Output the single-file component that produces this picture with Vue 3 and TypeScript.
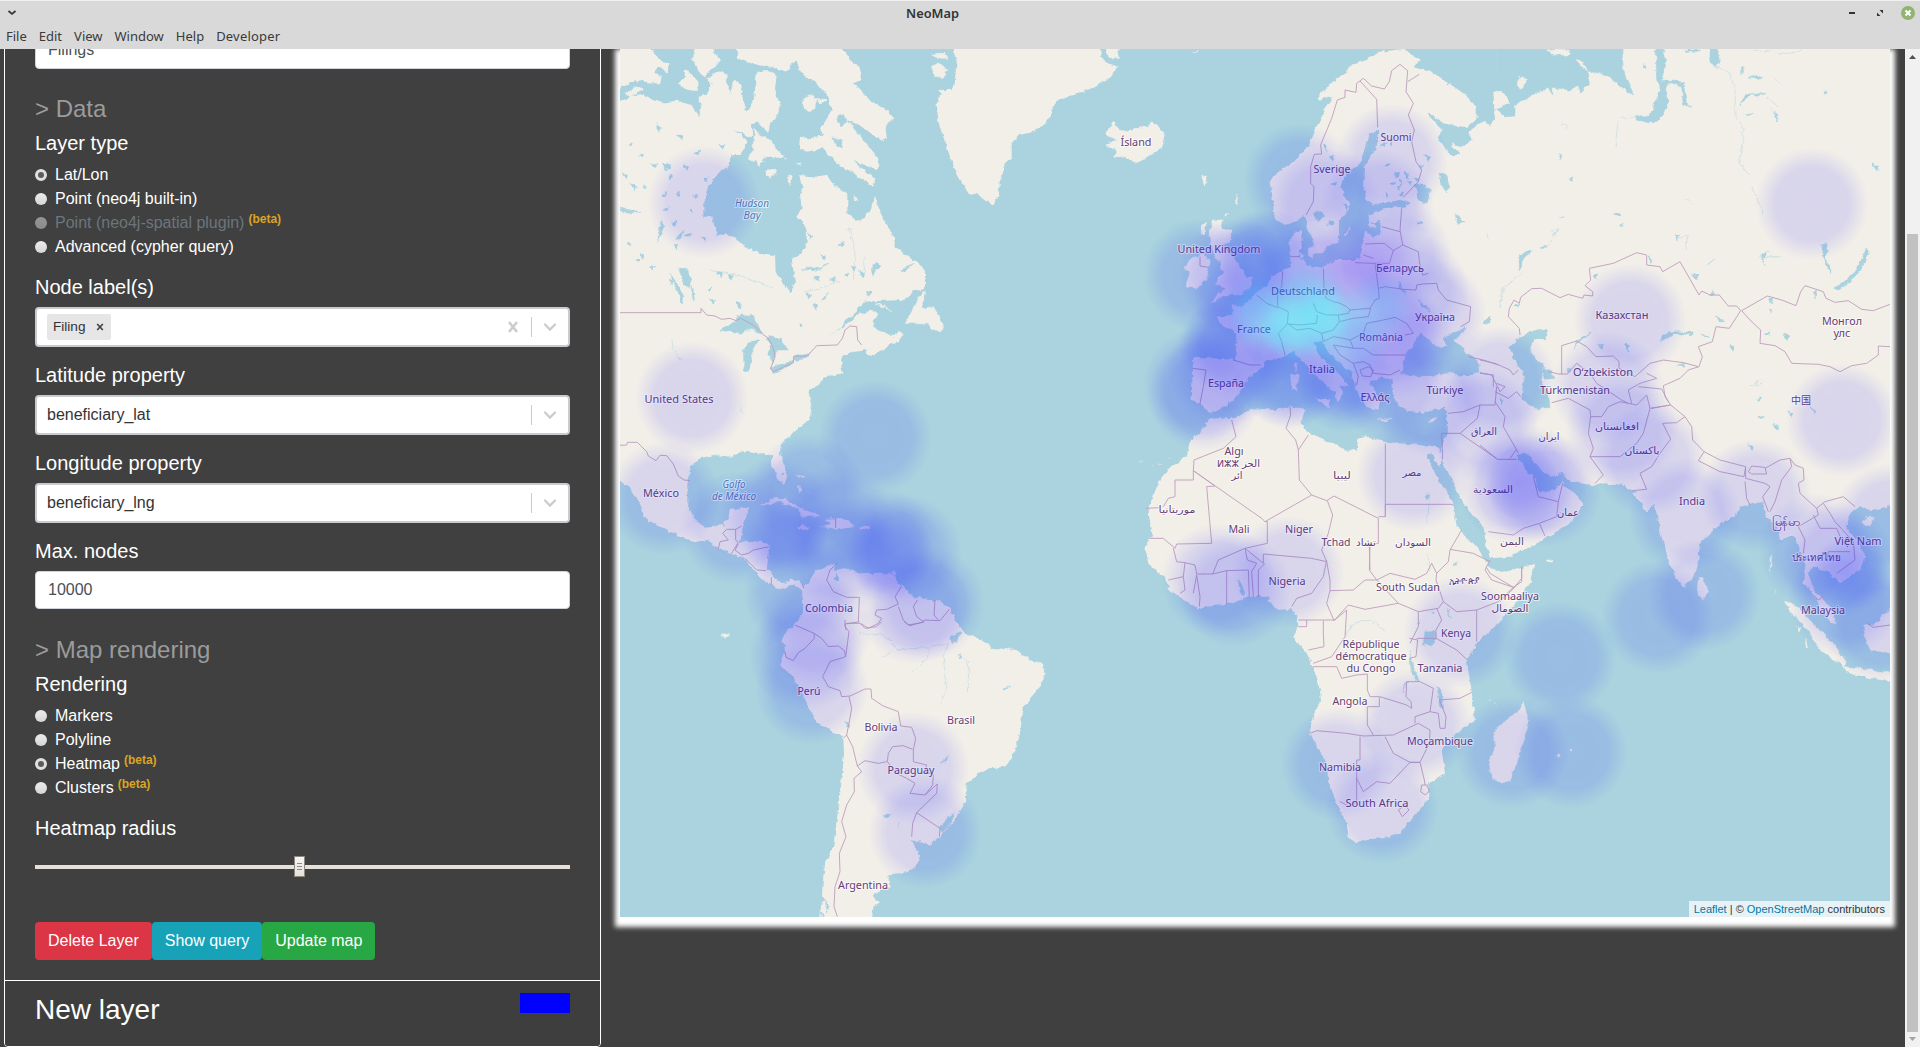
<script setup lang="ts">
import { ref } from 'vue'

type Pt = [number, number]
interface Sheet { at: Pt; land?: string[]; water?: string[]; isles?: string[]; borders?: string[]; rivers?: string[] }
interface Label { x: number; y: number; w: number; t: string; sea?: boolean }

const menus = ['File', 'Edit', 'View', 'Window', 'Help', 'Developer']
const layerType = ref('latlon')
const rendering = ref('heatmap')
const layerTypes = [
  { id: 'latlon', name: 'Lat/Lon' },
  { id: 'point', name: 'Point (neo4j built-in)' },
  { id: 'spatial', name: 'Point (neo4j-spatial plugin)', beta: true, disabled: true },
  { id: 'advanced', name: 'Advanced (cypher query)' },
]
const renderings = [
  { id: 'markers', name: 'Markers' },
  { id: 'polyline', name: 'Polyline' },
  { id: 'heatmap', name: 'Heatmap', beta: true },
  { id: 'clusters', name: 'Clusters', beta: true },
]
const properties = [
  { title: 'Latitude property', value: 'beneficiary_lat' },
  { title: 'Longitude property', value: 'beneficiary_lng' },
]

// Map sheets: path units are thirds of a pixel, measured from the sheet's origin.
const sheets: Sheet[] = [
  {
    at: [610, 40],
    land: [
      // North and Central America
      'M20 190L60 170 100 165 120 175 150 188 200 182 225 190 245 195 268 228 275 190 262 170 290 165 305 130 330 110 345 110 360 160 370 122 385 125 395 150 400 185 412 215 430 190 435 150 440 95 475 90 500 105 495 150 512 200 500 230 480 250 475 280 440 245 425 250 430 285 415 292 370 270 410 300 395 345 365 345 350 382 325 400 300 435 283 480 283 530 308 533 320 587 345 580 375 592 405 620 450 640 495 645 497 700 520 725 540 755 555 730 545 655 575 640 590 610 590 570 575 545 560 533 575 500 570 465 578 450 567 405 620 410 645 405 680 440 712 460 712 520 745 547 775 520 785 490 795 472 820 540 850 580 855 615 880 640 920 665 945 690 945 740 910 755 880 780 760 785 740 815 720 830 690 865 650 890 700 860 740 825 780 812 800 815 800 828 790 850 800 870 830 880 850 895 865 870 878 885 865 905 840 915 815 930 790 948 772 945 770 930 735 935 700 945 693 975 700 1000 640 1010 635 1025 600 1050 598 1070 605 1100 600 1135 560 1170 530 1195 512 1215 510 1240 520 1270 530 1305 520 1335 500 1310 487 1275 485 1250 465 1240 440 1240 420 1232 395 1235 365 1250 310 1245 270 1255 240 1280 238 1310 232 1330 232 1390 255 1440 285 1460 340 1455 358 1430 358 1410 415 1402 412 1430 400 1455 390 1505 425 1503 470 1507 478 1525 470 1590 500 1620 520 1630 545 1618 570 1622 582 1645 580 1655 550 1630 525 1650 480 1635 450 1610 425 1580 400 1555 365 1542 330 1525 290 1500 255 1507 230 1500 170 1470 130 1448 100 1430 95 1395 60 1345 20 1310z',
      'M20 15L120 27 140 45 155 65 178 72 172 98 150 80 130 95 155 112 150 130 120 130 95 120 60 130 20 150z',
      // Northern South America
      'M575 1645L595 1625 615 1595 650 1580 680 1568 670 1590 705 1585 730 1590 745 1600 810 1598 850 1605 862 1625 880 1640 905 1670 960 1680 985 1680 1015 1700 1045 1755 1050 1790 1000 1840 600 1840 520 1800 553 1755 578 1720 580 1690z',
      // Greenland
      'M1022 15L1040 60 1035 120 1025 150 985 150 995 165 980 190 985 250 1000 290 1020 350 1040 400 1075 460 1100 462 1150 495 1165 470 1170 420 1185 370 1205 350 1205 310 1225 285 1270 275 1310 250 1330 200 1345 180 1380 165 1440 150 1500 115 1525 78 1490 70 1475 55 1468 15z',
      // Baffin Island
      'M375 20L385 50 430 75 480 80 530 95 555 62 575 100 620 130 650 165 665 210 640 250 630 262 640 285 600 295 570 290 567 325 590 335 640 325 680 370 730 400 790 440 795 420 730 360 800 390 805 355 770 310 735 270 715 240 770 270 815 305 830 290 825 260 852 235 835 215 780 180 730 130 755 120 745 80 720 60 690 20z',
    ],
    water: [
      'M680 225L700 225 715 245 690 260z', 'M668 290L690 300 698 320 680 315z', 'M330 875L345 860 375 845 385 825 425 825 450 860 455 880 425 868 390 880 360 872z', 'M425 900L400 930 402 990 415 997 428 960 425 925 450 900z', 'M468 895L485 915 475 945 490 965 500 930 535 930 510 895 480 890z', 'M480 985L520 970 550 965 545 975 490 998z', 'M550 950L595 938 590 955 552 962z',
      'M205 685L230 685 240 710 240 745 225 735z', 'M243 740L255 760 250 782z', 'M180 700L200 730 222 770 215 782 195 740z', 'M380 785h12l4 15-10 6z', 'M155 540L162 560 140 608 148 570z', 'M200 595L222 570 210 598z', 'M160 370h15l5 12-15 10z', 'M30 505L90 515 50 520z', 'M870 690L915 672 885 692z', 'M785 675L800 668 810 680 790 695z', 'M575 686L625 683 660 672 610 692z', 'M635 780L655 757 645 778z', 'M678 1600q10 8 8 18q-8 10-14-2z', 'M515 1296h6v8h-6z',
    ],
    isles: [
      'M255 20L250 60 262 90 285 108 320 72 332 58 310 40 310 20z', 'M225 90L245 105 265 130 262 152 230 150 205 130 225 112z', 'M290 115L325 95 355 105 340 125 305 130z', 'M580 190L585 170 605 162 618 175 615 205 595 212 582 205z', 'M620 175L648 178 645 188 625 186z', 'M435 268L455 290 480 300 500 330 528 355 490 352 465 350 445 380 440 360 412 358 428 330z', 'M470 405L475 392 500 387 495 402 478 413z', 'M530 410L545 403 538 433z', 'M560 370L575 370 572 380z', 'M45 160L80 140 100 148 60 172z', 'M965 45L1005 40 1015 55 985 55z', 'M965 78L985 68 1010 90 1000 115 975 112z', 'M945 750L925 775 905 815 888 850 950 852 970 870 995 872 1000 850 970 800 935 805z', 'M798 792L825 798 845 812z', 'M825 885L860 885 840 897z', 'M455 1395L490 1375 530 1380 565 1400 590 1412 630 1428 575 1430 565 1405 510 1385z', 'M645 1437L690 1435 715 1445 732 1457 680 1465 630 1460 665 1452z', 'M562 1460L580 1456 597 1465 580 1470z', 'M753 1459h24l-2 7h-22z', 'M560 1305l22 5-2 3zM565 1335l8 20-5 3zM335 1780l25 5-15 10zM590 1350l10 12M735 470l6 8-5 5z', 'M850 1595h9v10h-9z',
    ],
    borders: [
      'M30 818H273V805L290 825 315 828 335 838 360 835 378 842 392 835 430 855 455 880 475 895 490 925 495 950 482 985 490 995 550 968 552 948 592 948 620 917 682 915 697 895 705 870 720 858 740 860 743 900 755 915',
      'M30 1216L50 1215 52 1207H82L110 1235 115 1248 138 1262 150 1246 170 1247 190 1272 205 1308 222 1320 240 1322', 'M325 1528L330 1505 355 1500 338 1480 350 1468H377L395 1458M377 1468V1500L385 1507 365 1540M385 1512L375 1530 395 1545 415 1540 430 1530 478 1520M405 1555L440 1590 468 1592M484 1612V1635M575 1630L582 1645M677 1435V1465',
      'M683 1568L660 1590 650 1620 670 1655 710 1672H748L745 1745M748 1745L705 1752 708 1770M752 1750L775 1765 805 1750 815 1735 795 1725 800 1710 830 1708 865 1692 855 1670 875 1638M865 1700L880 1740 895 1755 940 1747 942 1740 990 1742 1018 1708M922 1680L910 1700 920 1730 940 1745M975 1680L972 1725 985 1740',
    ],
    rivers: ['M185 900L190 930 215 960M300 690L400 710 490 745M715 560L735 640 730 720M395 1100l2 20M580 755L620 750 690 720M760 650L770 700'],
  },
  {
    at: [750, 620],
    land: ['M115 25L570 -10 628 18 650 45 680 50 718 72 720 88 740 85 800 90 840 120 875 128 885 165 870 200 840 235 818 262 812 330 800 380 775 425 765 440 720 445 690 460 650 490 648 545 620 590 570 650 540 675 485 660 500 690 512 710 495 745 450 760 415 763 418 800 370 822 375 835 392 845 370 860 365 905 205 905 215 850 218 790 225 730 250 680 260 600 275 480 282 400 280 355 200 305 175 260 150 210 125 165 95 140 95 115 105 95 98 60z'],
    water: ['M285 305l12 5 2 15-10-5z', 'M400 583h16l-2 10-12-2z', 'M570 620L612 578 600 612 575 640z', 'M215 830l12 8-12 20zM230 840l6 20-6 20zM210 870l10 15-4 18z', 'M575 430L595 405 590 418z', 'M628 100l8 12-4 8zM755 208l25-8-18 12z', 'M600 50l40-15-30 40z'],
    borders: ['M135 15L192 40 193 55 165 85 145 98 130 122 108 112 105 95M192 40L215 55 235 80 265 78 283 92 287 110 240 125 218 170 235 200 270 212 275 230 300 228 345 207H363L365 235 400 258 445 275 452 318 485 322 497 355 490 390V425L530 435 525 455 550 465 548 495 525 525 480 520 495 490 470 475 440 460 412 425 415 400 428 380 460 377 488 388M297 230L305 265 297 310 290 345 308 380 322 438 345 422 385 430 410 425M290 345L280 355M285 0V20L297 35 287 110M322 438L335 455 312 475 313 515 290 555 275 605 288 650 268 700 270 755 255 800 252 860 262 890M525 525L562 492 560 520 500 578 570 625 568 650M500 578L488 610 485 650M290 10H330L345 25 380 20 395 5M462 5L480 17 522 5'],
    rivers: ['M330 40L400 45 450 90 540 80 595 70M540 80L535 110 485 160M595 70L580 110 590 210 570 250M395 112L430 95M640 110L665 160', 'M655 120v100M445 605v15'],
  },
  {
    at: [1050, 40],
    land: [
      // Scandinavia
      'M705 555L675 540 668 480 662 420 690 390 735 360 780 310 800 260 830 200 850 170 800 180 840 130 880 105 905 75 950 60 990 35 1060 27 1110 60 1085 80 1140 95 1190 125 1240 160 1280 200 1280 235 1250 262 1200 255 1165 240 1130 215 1150 290 1050 290 985 272 960 280 945 320 930 370 880 410 872 445 895 485 900 505 870 540 870 570 860 610 830 615 820 640 795 640 790 600 775 570 765 525 735 545z',
      // European mainland
      'M1400 150L1350 150 1330 155 1335 240 1320 255 1300 245 1258 275 1265 300 1240 320 1205 310 1228 345 1200 345 1165 300 1175 270 1130 220 985 272 975 330 945 380 942 440 950 480 975 495 1060 478 1085 490 1060 500 1000 505 955 525 960 550 985 545 995 560 990 585 970 590 945 570 938 620 930 650 910 660 855 660 820 680 790 685 770 670 745 650 758 600 755 570 735 580 718 605 722 640 725 680 700 690 665 710 650 740 620 755 605 775 575 800 545 795 550 825 500 830 510 850 550 870 560 900 555 960 500 955 430 955 428 990 425 1080 455 1095 480 1118 520 1105 550 1080 565 1060 585 1035 600 1010 635 985 650 960 700 950 730 935 760 965 785 1000 830 1035 855 1060 862 1085 880 1062 868 1035 897 1042 870 1005 830 965 800 935 790 908 815 903 840 940 880 980 908 1000 915 1040 935 1075 950 1105 985 1112 990 1080 970 1050 960 1030 985 1012 1030 1018 1025 1050 1040 1095 1070 1112 1120 1118 1180 1103 1195 1120 1400 1120z',
    ],
    water: [
      'M1055 1000L1060 960 1078 930 1100 900 1108 880 1130 895 1150 915 1180 925 1195 915 1180 895 1248 862 1232 880 1212 902 1240 930 1285 965 1290 995 1250 1010 1200 998 1140 1007 1090 1008z', 'M1095 435L1125 435 1140 455 1130 490 1105 480z', 'M1168 400L1185 400 1200 440 1190 460 1172 430z', 'M790 520l20-5 15 10-20 20zM840 540l15 5-20 15z', 'M1215 525L1245 545 1225 550z', 'M1315 575v25M1300 850l20-22-10 20z', 'M990 1018h32l-10 8z', 'M1043 720l10 20 15 20-20-15zM1105 780l40 35-30-20z', 'M1105 545h12v8h-12z',
    ],
    isles: [
      'M490 540L520 540 515 565 548 570 540 600 520 615 550 650 570 680 590 710 608 715 600 745 570 765 520 765 485 790 505 760 530 750 495 730 520 700 510 670 495 650 480 600 480 570z', 'M435 650L460 645 482 660 475 690 470 720 440 745 405 740 420 700 405 680z', 'M455 555l15-10-8 40-8-5z', 'M165 285L190 247 210 270 235 275 250 262 295 262 305 243 330 265 345 290 335 325 300 345 260 368 225 350 190 350 205 335 170 315 205 300z', 'M455 410l15-2-5 30zM552 485l12-22-5 30zM522 525l10-5-5 12z', 'M748 635l15 10-10 8zM775 625l15-5 10 15-15 20-10-10z', 'M885 585l15-22-10 25zM855 600l4-20z', 'M955 540l15-10 5 8zM955 552l18 0 5 10-18 2z', 'M735 965L742 970 738 995z', 'M722 1005L745 1005 740 1050 725 1045z', 'M795 1075L838 1078 835 1100z', 'M985 1135L1025 1138 1010 1143z', 'M1135 1143L1160 1134 1145 1148z', 'M425 38l18-8z', 'M165 20h40v35l-25 2z',
    ],
    borders: [
      'M768 525L790 485 792 440 782 430 782 380 793 343 815 342 812 315 845 235 862 180 885 172 885 150 918 157 920 130 940 115 965 138 1003 147 1018 125 1025 92 1050 73 1073 92 1068 155 1090 190 1075 225 1093 270 1085 305 1098 365 1115 390 1105 425 1060 472M930 123L980 178 983 262M1073 125L1108 103M1055 505L1050 570 1058 615 1030 632 1003 610 945 612M995 560L1050 575M1058 615L1105 635 1108 665 1118 705 1135 700M1030 632L1018 670 970 670 915 668M970 655L940 645M975 670L985 745 1005 740 1060 748 1098 750 1100 735 1118 732M1118 732L1160 730 1165 750 1190 780 1262 800 1258 845 1232 860M820 685L822 745 828 775 850 785 870 790 890 800 900 810 960 805 975 780 988 775 985 745M698 695L695 740 682 755 683 800 715 815 712 852 685 880 695 905 705 945M620 765L650 790 683 803M790 790L800 815 830 825 865 825 868 845 850 870 815 880 780 865 740 870 715 852 750 855 800 850 802 825M865 825L895 820 900 808M868 845L910 835 955 830 962 805M900 900L940 880 950 850 1000 840 1035 832 1070 850 1090 880 1065 885M815 880L820 905 850 890 880 895 900 900 910 925 850 915 870 945 910 970M910 925L940 925 970 945 1068 945M910 970L940 965 960 975 970 1000 1020 1005 1050 990M910 970L925 1010 920 1035M930 990l25-10 15 10-8 20-25-2zM550 960L600 975 632 975M428 985L468 990 460 1040 450 1090M450 650L450 678 475 682M722 650H748M1255 950L1300 960 1345 975M1290 1000L1330 1005 1330 1040',
    ],
  },
  {
    at: [1130, 380],
    land: ['M925 205L870 195 810 190 760 185 720 170 685 175 680 210 650 212 600 185 530 155 515 125 525 90 480 80 440 90 370 85 310 115 240 115 215 155 180 180 170 230 110 270 75 330 55 385 65 470 45 500 55 550 100 590 120 630 170 665 205 685 300 670 360 650 410 650 435 685 485 690 505 710 500 745 490 770 530 820 555 870 568 920 573 960 545 1020 540 1060 590 1150 595 1210 625 1280 650 1330 655 1375 678 1390 700 1378 760 1375 810 1360 860 1300 898 1250 898 1210 945 1180 935 1110 980 1060 1035 1020 1025 935 1010 840 1050 780 1150 680 1205 600 1212 555 1110 580 1080 560 1040 500 980 440 970 370 920 290 890 225 905 220 928 262 932 235z'],
    water: ['M885 755L915 755 918 778 900 800 880 790z', 'M838 815L850 860 868 905 850 890 838 850z', 'M920 920l12 10 10 60-10-10z', 'M830 905l-8 15-3 20z', 'M885 345l15 0-10 15zM325 600l18 30-5 20-8-15zM950 685l8 20 6 10zM970 548h10v8h-10zM905 695l10 4-5 6z', 'M890 220L905 240 925 262z', 'M863 730l8-8v6z'],
    isles: ['M30 250l10-8M88 255l8-5M115 235l8 0M62 255l6 4'],
    borders: [
      'M480 80L482 105 468 145 497 180 505 210M535 165L505 210 508 300 545 345 405 425 395 415 190 272 192 240 280 205 318 170 305 120M190 272V300H135V350L115 355 100 380M48 385L88 383M190 272L255 318 230 320 245 490 140 492 135 505 100 475 60 475M405 425H412V490L345 505 265 540 248 582H200L195 555 165 548 140 545 130 505M545 345L590 362 612 348 745 415V490L720 495 718 570 740 600 705 600 670 630 600 632M592 362L608 405 595 460 575 510 590 545 545 535 400 522 400 550 345 505M745 410H766V190M766 373H970M766 373V410M345 505L352 540 380 550 365 575 370 650M290 672V572L355 570 358 650M385 650V570L405 550M248 582L290 572M200 585L210 650 208 680M165 548L160 590 115 600M160 590L165 630 150 640M190 640L200 585M590 540L580 590 545 640 500 655 485 680M590 545L600 600 600 632 590 670 612 722 655 675 705 688 805 670M505 720H612M505 740H530V720M580 722V760L582 800 535 810M612 722L650 690 645 770 605 830 550 850M740 600L780 580 855 598 890 580 905 550 920 580 918 600 940 665 925 685 865 695 805 670 740 600M720 570L718 500M995 450L960 510 955 545 920 580M960 508L1030 520 1080 545M1068 560L1080 580 1150 622 1175 605V560M1150 622L1105 665 1040 690 980 695 940 665M1040 690V785M865 695L865 740 840 790M920 685L935 720 918 750V775L860 775M918 775L980 810 1010 838M838 775l25 5-5 50-20 5M550 860H620L635 895 680 885 712 882V930L720 950H748V980H712V1035L730 1065',
      'M540 1060L560 1052 650 1060 700 1068 790 1065 865 1030 900 1050 898 1090 870 1147 840 1147 790 1120 765 1070M750 950L830 975 845 985 843 965 828 950 830 905 870 905 910 925 900 995 855 1010V1030M900 995L925 1000 930 1045 945 1045 948 1010 928 960 990 955 1025 937M690 1070V1140H680V1265L660 1280 630 1265M680 1195L700 1235 740 1205 780 1210 840 1147 870 1147 883 1200 885 1215M875 1215l15 0 8 18-12 12-14-10zM805 1290l20-15 12 15-20 20z',
    ],
    rivers: ['M645 770L670 730 720 720 765 750M893 520L900 570M895 350L890 430'],
  },
  {
    at: [1270, 620],
    isles: ['M760 245L768 275 778 300 765 350 740 430 720 480 695 490 665 475 658 430 675 380 670 340 690 315 740 280z', 'M862 405l8 0v7h-6zM898 390l6 0v6h-6z', 'M656 235l4 8M672 250l6 6'],
  },
  {
    at: [1480, 220],
    land: ['M0 -60H1260V850L1180 870 1140 860 1110 880 1095 920 1130 960 1155 1010 1140 1050 1080 1090 1045 1055 1000 1040 985 1060 995 1090 1010 1120 1050 1160 1070 1210 1055 1210 1030 1180 1010 1140 990 1110 968 1085 975 1040 960 990 940 945 900 960 890 920 860 890 850 845 780 860 770 880 700 930 660 970 655 1020 640 1070 612 1100 590 1080 560 1010 535 910 525 855 500 875 460 820 470 812 445 808 425 790 340 795 270 785 250 760 215 770 235 800 248 780 255 800 285 820 310 855 270 910 190 960 90 1010 30 1015 20 980 10 920 -50 850 -100 750 -122 705 -100 640 -98 570 0 540z'],
    water: [
      'M110 705L135 700 150 708 170 740 190 755 215 772 250 758 262 785 248 782 235 800 205 815 180 812 165 795 160 770 145 755z',
      'M150 335L180 328 200 335 195 360 165 358 150 385 165 420 185 430 190 455 180 480 205 515 210 562 170 568 125 540 130 490 135 470 105 420 90 385 120 350z', 'M190 445L215 455 222 475 192 478z', 'M1160 85L1165 95 1145 145 1110 190 1070 210 1060 205 1100 180 1130 150z', 'M545 365L545 350 565 335 640 336 635 344 580 342 555 360z', 'M590 438L620 432 610 442z', 'M285 388L288 365 330 338 320 350 292 372zM262 445l10 0v12h-10z', 'M1000 215l10-5-5 25zM865 238l15-5-5 15zM665 342l20 8 5 8zM708 285l25 20-15 0z', 'M810 500l40-12M820 490l30-15M30 312L10 310 30 285zM990 558l20 15-2 8z', 'M118 105l15-8 20-2-20 8-5 30-10 20 0-25zM1020 75l20-4 5 20-10 20 15 30 0 20-12-35-10-20z', 'M845 105l20-8-15 15 5 25zM680 135l28-20z', 'M60 530l8 10-3 14z',
    ],
    isles: ['M655 1075L670 1078 687 1115 668 1138 650 1125z', 'M1143 905L1160 892 1182 892 1165 920z', 'M915 1145L960 1165 985 1200 1010 1220 1060 1270 1098 1325 1092 1340 1050 1310 1015 1285 985 1230 940 1185z', 'M1090 1340L1140 1345 1240 1360V1385L1150 1370 1095 1355z', 'M1150 1215L1180 1215 1240 1160V1300L1170 1290 1160 1270z', 'M870 1010l5-5-4 50zM885 1110l5 10M200 1020h15v6h-13z', 'M160 780l5-5 5 20-8 8z', 'M950 1215l12 15-4 5zM975 1255l8 25-5 0z'],
    borders: [
      'M120 345L118 325 85 290 88 265 102 240 118 250 122 232 155 206 185 205 240 233 265 223 308 235 312 225 338 228V215L315 197 332 180 328 145 400 130 470 98 500 105V135L540 140 548 155 600 125 657 225 665 213 690 225 718 225 745 258 770 258 782 272 748 325 708 320 697 365 655 380 667 410 657 440 625 450 600 475 550 497 555 530 572 555 515 565M785 272L862 228 905 240 948 257 962 215 975 197 1030 215 1038 235 1065 247 1105 242 1145 268 1180 272 1230 253M785 272L810 300 842 330 840 370 885 377 915 395 935 430 1015 433 1050 440 1080 455 1115 437 1160 430 1195 405V378L1230 380M245 463V377L290 363 320 380 348 410 400 408 417 425V445L465 470 510 430 550 420 610 428 655 440M205 455L235 462H262L290 430 330 460 350 490 425 540 445 550M215 548L265 535 330 570 332 590M332 590L365 590 385 560 420 545 470 555 500 525 510 565 490 640 470 670 420 710 330 710M332 590L325 640 340 685 330 710 370 765 345 790M455 550L445 510 480 490 530 475 500 460M475 500L545 507 565 545M510 565L572 555 615 590 590 608 548 610 572 657 540 700 515 740 480 760 500 808 458 812M615 590L635 620 638 660 672 695M672 695L655 722 720 755 792 770 797 740 720 720 672 695M805 755L815 738 855 742 860 762 815 762zM797 740L797 775 855 790 870 800 848 830 865 875M855 745L900 720 930 715 945 735 970 745 972 780 955 790 960 820 1010 865 1035 845 1090 830 1125 860M930 715L935 740 905 780 885 845 870 875M795 785L800 835 810 855M1010 865L1015 885 955 920 975 960 970 1000M1030 850L1050 880 1065 905 1120 965 1125 1020 1070 1060M1000 885L1020 925 1070 925 1085 960M1040 1020L1045 995 1110 995M1000 1125L1015 1140 1030 1130M0 420L45 430 90 450 100 465 115 450M0 458L35 465 60 515 75 500 50 490M50 500L45 555 0 555M45 515L85 535 110 515 122 530M45 545L75 590 70 620 110 690 115 700M0 675L52 718 110 718M90 715L108 690M160 770L175 830 235 845 248 790M235 845L230 890 178 910 130 925 100 945 25 935M178 910L195 948M1160 1210L1180 1222 1230 1215',
      'M-95 580L-50 575 0 555 -8 595 -60 640 -115 640 -112 718M-60 640L50 716',
      'M30 1020L15 1050 35 1080 103 1103 125 1075V1040M103 1103L60 1145',
    ],
    rivers: ['M215 30L235 28 205 80M70 200L60 260 75 200 125 160M590 60L625 40 615 90'],
  },
  {
    at: [1500, 0],
    land: ['M-10 60H1190V800H-10z'],
    water: ['M-10 130H365L370 210 400 285 385 275 330 235 300 220 265 210 268 250 240 280 235 255 210 270 155 262 155 285 145 262 100 285 45 315 45 345 15 348 -12 325 28 310 20 285 -12 270z', 'M468 130L490 150 497 175 485 245 520 240 550 250 560 310 575 318 550 318 545 262 515 248 495 258 505 300 490 345 462 372 410 360 408 350 450 345 478 280 485 270 470 240z', 'M630 147h22l6 35-8 20-20-15z', 'M720 315L735 285 760 280 740 295zM745 235l30-10 15 8-20 2zM755 285l45-8-30 12zM725 200l5 0 0 20-5 0z', 'M560 150h40v4h-40zM430 195h10v8h-10zM735 345l25-5-18 8zM820 335l15 10-5 15zM1115 490l12 8 15 0-12 15z', 'M972 275l8 0v6h-8zM60 770l15-15 20 0-25 20z', 'M120 745l20-8-2 8zM180 655l10-5zM155 710l20-20z'],
    isles: ['M140 150L165 147 205 150 210 165 165 165z', 'M230 178L245 185 265 213 250 205z', 'M52 245L62 228 82 238 80 250 60 268z'],
    rivers: ['M650 200L690 220 705 270 708 350 730 385 728 440 718 490 748 525M355 360L345 440M365 355L410 350M755 560L790 640M800 290l35 30M810 320l30 30M825 235l15 20M550 590l25 20M850 770h-70', 'M760 150q30 10 60 0M835 160q30 10 70-10M180 375q20-10 20 10'],
  },
]

// Lakes dotted over the Canadian Shield, Finland and Siberia.
const ponds: string = [
  [20, 100], [30, 110], [42, 120], [60, 130], [75, 120], [85, 108], [95, 135], [110, 100], [68, 90], [48, 80], [55, 165], [62, 178], [80, 165], [92, 192], [30, 208], [18, 200], [27, 215], [40, 222], [60, 235], [75, 228], [52, 150], [67, 148], [84, 150], [108, 228], [120, 230], [98, 245], [76, 190], [65, 200], [14, 130], [22, 140], [34, 142], [70, 255], [100, 255], [200, 190], [212, 210], [222, 235], [236, 230], [242, 222], [250, 228], [262, 225], [230, 200], [205, 233], [258, 248], [204, 260], [196, 248], [190, 280],
  [776, 120], [785, 128], [790, 135], [795, 128], [780, 140], [788, 142], [798, 138], [805, 132], [776, 148], [790, 150], [772, 100], [780, 95], [810, 120], [815, 110], [760, 110], [720, 112], [728, 125], [715, 100], [735, 160], [722, 140], [1010, 180], [1066, 190], [1084, 230], [1040, 212], [1100, 250], [905, 260], [1160, 265], [1175, 290], [1120, 300], [1148, 355], [1150, 372], [1164, 380], [1180, 368], [1140, 400], [1155, 290], [985, 230], [990, 300], [1015, 300], [950, 110], [960, 135], [1005, 170],
].map(([x, y], i) => `M${610 + x} ${45 + y}l${2 + (i % 3)} ${(i % 5) - 2}l-1 ${2 + (i % 2)}z`).join('')

const heat: [number, number][] = [
  [1812, 204], [704, 202], [692, 398], [875, 437], [664, 498], [737, 528], [808, 490], [777, 515], [837, 522], [843, 555], [883, 545], [905, 552], [928, 603], [800, 592], [806, 655], [815, 628], [812, 688], [913, 768], [925, 832], [915, 608],
  [1338, 764], [1382, 807], [1415, 725], [1460, 632], [1512, 752], [1571, 752], [1560, 658], [1658, 617], [1704, 594], [1685, 515], [1755, 495], [1650, 460], [1630, 320], [1608, 388], [1622, 430], [1842, 420], [1500, 382], [1482, 425],
  [1515, 488], [1530, 482], [1545, 490], [1413, 475], [1430, 400], [1390, 385], [1218, 580], [1235, 590], [1288, 572], [1205, 395],
  [1815, 550], [1838, 562], [1845, 600], [1890, 520], [1880, 625],
  [1300, 180], [1325, 205], [1392, 160], [1378, 205], [1395, 255], [1412, 290], [1430, 315],
  [1200, 275], [1235, 275], [1265, 265], [1200, 385], [1225, 370], [1240, 345], [1275, 325], [1290, 370], [1310, 280], [1345, 300], [1345, 365], [1385, 330],
]
// Dense areas: x, y, radius, colour
const hot: [number, number, number, string][] = [
  [1270, 262, 52, '#1428ff'], [1222, 345, 44, '#1e28ff'], [1290, 375, 55, '#1428ff'], [1345, 385, 48, '#1e28ff'], [1400, 345, 55, '#4632ff'], [1345, 270, 50, '#5a32ff'], [1380, 265, 40, '#5a3cff'], [1235, 300, 42, '#3232ff'], [1522, 482, 38, '#2828ff'], [785, 540, 42, '#1e28ff'], [890, 552, 44, '#1e28ff'], [1850, 572, 38, '#1e32ff'],
  [1262, 310, 40, '#28a0ff'], [1265, 320, 36, '#28b4ff'], [1310, 292, 34, '#28aaff'], [1378, 308, 36, '#28aaff'], [1350, 340, 40, '#28a0ff'], [1325, 318, 42, '#1ed2ff'], [1300, 318, 46, '#1edcff'], [1292, 328, 32, '#14ffff'], [1325, 315, 28, '#14ffff'],
]

const labels: Label[] = [
  { x: 752, y: 207, w: 34, t: 'Hudson', sea: true }, { x: 752, y: 219, w: 17, t: 'Bay', sea: true },
  { x: 734, y: 488, w: 23, t: 'Golfo', sea: true }, { x: 734, y: 500, w: 44, t: 'de México', sea: true },
  { x: 679, y: 403, w: 69, t: 'United States' }, { x: 661, y: 497, w: 36, t: 'México' }, { x: 829, y: 612, w: 48, t: 'Colombia' },
  { x: 809, y: 695, w: 23, t: 'Perú' }, { x: 881, y: 731, w: 33, t: 'Bolivia' }, { x: 961, y: 724, w: 28, t: 'Brasil' },
  { x: 911, y: 774, w: 47, t: 'Paraguay' }, { x: 863, y: 889, w: 50, t: 'Argentina' }, { x: 1136, y: 146, w: 31, t: 'Ísland' },
  { x: 1396, y: 141, w: 31, t: 'Suomi' }, { x: 1332, y: 173, w: 37, t: 'Sverige' }, { x: 1219, y: 253, w: 83, t: 'United Kingdom' },
  { x: 1400, y: 272, w: 48, t: 'Беларусь' }, { x: 1303, y: 295, w: 64, t: 'Deutschland' }, { x: 1435, y: 321, w: 40, t: 'Україна' },
  { x: 1254, y: 333, w: 34, t: 'France' }, { x: 1381, y: 341, w: 44, t: 'România' }, { x: 1322, y: 373, w: 26, t: 'Italia' },
  { x: 1226, y: 387, w: 36, t: 'España' }, { x: 1375, y: 401, w: 29, t: 'Ελλάς' }, { x: 1445, y: 394, w: 37, t: 'Türkiye' },
  { x: 1484, y: 435, w: 26, t: 'العراق' }, { x: 1234, y: 455, w: 19, t: 'Algı' }, { x: 1228, y: 467, w: 22, t: 'ⵍⵣⵣ' },
  { x: 1251, y: 467, w: 18, t: 'الجز' }, { x: 1237, y: 479, w: 11, t: 'ائر' }, { x: 1342, y: 479, w: 18, t: 'ليبيا' },
  { x: 1412, y: 476, w: 19, t: 'مصر' }, { x: 1493, y: 493, w: 40, t: 'السعودية' }, { x: 1177, y: 513, w: 37, t: 'موريتانيا' },
  { x: 1239, y: 533, w: 21, t: 'Mali' }, { x: 1299, y: 533, w: 28, t: 'Niger' }, { x: 1336, y: 546, w: 29, t: 'Tchad' }, { x: 1366, y: 546, w: 20, t: 'تشاد' },
  { x: 1413, y: 546, w: 36, t: 'السودان' }, { x: 1512, y: 545, w: 24, t: 'اليمن' }, { x: 1287, y: 585, w: 37, t: 'Nigeria' },
  { x: 1408, y: 591, w: 64, t: 'South Sudan' }, { x: 1464, y: 584, w: 31, t: 'ኢትዮጵያ' }, { x: 1510, y: 600, w: 58, t: 'Soomaaliya' },
  { x: 1510, y: 612, w: 37, t: 'الصومال' }, { x: 1456, y: 637, w: 30, t: 'Kenya' }, { x: 1371, y: 648, w: 57, t: 'République' },
  { x: 1371, y: 660, w: 71, t: 'démocratique' }, { x: 1371, y: 672, w: 49, t: 'du Congo' }, { x: 1440, y: 672, w: 45, t: 'Tanzania' },
  { x: 1350, y: 705, w: 35, t: 'Angola' }, { x: 1440, y: 745, w: 66, t: 'Moçambique' }, { x: 1340, y: 771, w: 42, t: 'Namibia' },
  { x: 1377, y: 807, w: 63, t: 'South Africa' }, { x: 1622, y: 319, w: 53, t: 'Казахстан' }, { x: 1842, y: 325, w: 40, t: 'Монгол' },
  { x: 1842, y: 337, w: 17, t: 'улс' }, { x: 1603, y: 376, w: 60, t: 'Oʻzbekiston' }, { x: 1575, y: 394, w: 70, t: 'Türkmenistan' },
  { x: 1801, y: 404, w: 20, t: '中国' }, { x: 1617, y: 430, w: 44, t: 'افغانستان' }, { x: 1549, y: 440, w: 21, t: 'ايران' },
  { x: 1642, y: 454, w: 35, t: 'پاکستان' }, { x: 1692, y: 505, w: 26, t: 'India' }, { x: 1568, y: 516, w: 22, t: 'عمان' },
  { x: 1786, y: 526, w: 28, t: 'မြန်မာ' }, { x: 1858, y: 545, w: 47, t: 'Việt Nam' }, { x: 1816, y: 561, w: 49, t: 'ประเทศไทย' },
  { x: 1823, y: 614, w: 44, t: 'Malaysia' },
]

const place = (s: Sheet) => `translate(${s.at[0]} ${s.at[1]}) scale(${1 / 3})`
// The Siberian sheet lies under the others' land, so it is drawn first.
const ordered = [sheets[6], ...sheets.slice(0, 6)].filter(Boolean)
</script>

<template>
  <div class="window">
    <header class="chrome">
      <div class="titlebar">
        <svg class="caret" width="10" height="8" viewBox="0 0 10 8"><path d="M1.5 2 5 4.8 8.500 2" fill="none" stroke="#333" stroke-width="1.7" /></svg>
        <strong>NeoMap</strong>
        <div class="controls">
          <svg width="7" height="14" viewBox="0 0 7 14"><path d="M0 6h6v2H0z" fill="#333" /></svg>
          <svg class="restore" width="7" height="14" viewBox="0 0 7 14"><path d="M2.500 4H6v3.500zM0 6.500 3.500 10H0z" fill="#333" /></svg>
          <svg width="14" height="14" viewBox="0 0 14 14"><circle cx="7" cy="7" r="7" fill="#92b372" /><path d="M4.500 4.500l5 5m0-5-5 5" stroke="#fff" stroke-width="2" /></svg>
        </div>
      </div>
      <nav class="menu"><span v-for="m in menus" :key="m">{{ m }}</span></nav>
    </header>

    <div class="body">
      <div class="view">
        <aside class="panel">
          <section class="layer">
            <div class="control name">Filings</div>

            <h4>&gt; Data</h4>
            <h5>Layer type</h5>
            <div class="group">
              <label v-for="o in layerTypes" :key="o.id" :class="{ off: o.disabled }" @click="!o.disabled && (layerType = o.id)">
                <i class="radio" :class="{ on: layerType === o.id }" /><span>{{ o.name }}</span><sup v-if="o.beta">(beta)</sup>
              </label>
            </div>

            <h5>Node label(s)</h5>
            <div class="select">
              <span class="chip">Filing <svg width="8" height="8" viewBox="0 0 8 8"><path d="M1.200 1l5.600 6m0-6L1.200 7" stroke="#444" stroke-width="1.700" /></svg></span>
              <svg class="clear" width="12" height="12" viewBox="0 0 12 12"><path d="M2 1l8 10m0-10-8 10" stroke="#ccc" stroke-width="2.600" /></svg>
              <i class="bar" />
              <svg class="down" width="14" height="10" viewBox="0 0 14 10"><path d="M2 2.500l5 5 5-5" fill="none" stroke="#ccc" stroke-width="2.400" stroke-linecap="round" /></svg>
            </div>

            <template v-for="p in properties" :key="p.title">
              <h5>{{ p.title }}</h5>
              <div class="select">
                <span class="value">{{ p.value }}</span>
                <i class="bar" />
                <svg class="down" width="14" height="10" viewBox="0 0 14 10"><path d="M2 2.500l5 5 5-5" fill="none" stroke="#ccc" stroke-width="2.400" stroke-linecap="round" /></svg>
              </div>
            </template>

            <h5>Max. nodes</h5>
            <div class="control">10000</div>

            <h4>&gt; Map rendering</h4>
            <h5>Rendering</h5>
            <div class="group">
              <label v-for="o in renderings" :key="o.id" @click="rendering = o.id">
                <i class="radio" :class="{ on: rendering === o.id }" /><span>{{ o.name }}</span><sup v-if="o.beta">(beta)</sup>
              </label>
            </div>

            <h5>Heatmap radius</h5>
            <div class="slider"><i class="track" /><i class="thumb"><b /><b /><b /></i><i class="track rest" /></div>

            <div class="buttons">
              <button class="red">Delete Layer</button><button class="teal">Show query</button><button class="green">Update map</button>
            </div>
          </section>
          <section class="next"><h3>New layer</h3><i class="swatch" /></section>
        </aside>

        <main class="map">
          <svg class="tiles" width="1270" height="868" viewBox="620 49 1270 868">
            <defs>
              <filter id="coast" x="0" y="0" width="100%" height="100%">
                <feTurbulence type="fractalNoise" baseFrequency="0.16" numOctaves="3" seed="4" result="n" />
                <feDisplacementMap in="SourceGraphic" in2="n" scale="5" xChannelSelector="R" yChannelSelector="G" />
              </filter>
              <radialGradient id="spot">
                <stop offset="0" stop-color="#1414ff" stop-opacity=".19" />
                <stop offset=".66" stop-color="#1414ff" stop-opacity=".18" />
                <stop offset=".84" stop-color="#1414ff" stop-opacity=".08" />
                <stop offset="1" stop-color="#1414ff" stop-opacity="0" />
              </radialGradient>
              <radialGradient v-for="(h, i) in hot" :id="'hot' + i" :key="i">
                <stop offset="0" :stop-color="h[3]" stop-opacity=".42" />
                <stop offset=".5" :stop-color="h[3]" stop-opacity=".3" />
                <stop offset="1" :stop-color="h[3]" stop-opacity="0" />
              </radialGradient>
            </defs>
            <rect x="620" y="49" width="1270" height="868" fill="#aad3df" />
            <g filter="url(#coast)">
              <rect x="620" y="49" width="1270" height="868" fill="#aad3df" />
              <g v-for="(s, i) in ordered" :key="'l' + i" :transform="place(s)">
                <path v-for="(d, k) in s.land" :key="k" :d="d" class="land" />
              </g>
              <g v-for="(s, i) in ordered" :key="'w' + i" :transform="place(s)">
                <path v-for="(d, k) in s.water" :key="k" :d="d" class="water" />
              </g>
              <g v-for="(s, i) in ordered" :key="'i' + i" :transform="place(s)">
                <path v-for="(d, k) in s.isles" :key="k" :d="d" class="land isle" />
                <path v-for="(d, k) in s.rivers" :key="'r' + k" :d="d" class="river" />
              </g>
              <path :d="ponds" class="water" />
            </g>
            <g v-for="(s, i) in ordered" :key="'b' + i" :transform="place(s)">
              <path v-for="(d, k) in s.borders" :key="k" :d="d" class="border" />
            </g>
            <text v-for="l in labels" :key="l.t" :x="l.x" :y="l.y" :textLength="l.w" lengthAdjust="spacingAndGlyphs" :class="['place', { sea: l.sea }]">{{ l.t }}</text>
            <g opacity=".62">
              <circle v-for="(h, i) in heat" :key="'h' + i" :cx="h[0]" :cy="h[1]" r="57" fill="url(#spot)" />
              <circle v-for="(h, i) in hot" :key="'x' + i" :cx="h[0]" :cy="h[1]" :r="h[2]" :fill="`url(#hot${i})`" />
            </g>
          </svg>
          <div class="credit"><a>Leaflet</a> | © <a>OpenStreetMap</a> contributors</div>
        </main>
      </div>

      <div class="scroll">
        <svg width="15" height="15" viewBox="0 0 15 15"><path d="M4 10h7L7.500 6z" fill="#505050" /></svg>
        <i class="grip" />
        <svg width="15" height="15" viewBox="0 0 15 15"><path d="M4 5h7L7.500 9z" fill="#a3a3a3" /></svg>
      </div>
    </div>
  </div>
</template>

<style>
body { margin: 0; overflow: hidden; background: #404040; }
</style>

<style scoped>
.window { height: 1047px; width: 1920px; display: flex; flex-direction: column; font: 16px/24px "Liberation Sans", Arial, sans-serif; color: #fff; overflow: hidden; }
.chrome { height: 49px; flex: none; box-sizing: border-box; background: #d9d9d9; border-top: 1px solid #f0f0f0; color: #3a3a3a; font: 13px/20px "Noto Sans", "Open Sans", sans-serif; z-index: 1; }
.titlebar { display: grid; grid-template-columns: 1fr auto 1fr; align-items: center; height: 24px; padding: 0 5px 0 7px; }
.titlebar strong { font-weight: 600; margin-right: 57px; font-size: 12.800px; color: #333; }
.controls { display: flex; gap: 21px; justify-content: flex-end; align-items: center; }
.restore { margin-right: -4px; }
.caret { display: block; }
.menu { display: flex; gap: 12px; padding: 1px 0 0 6px; font-size: 13px; }
.menu span:last-child { letter-spacing: .2px; }
.body { flex: 1; display: flex; min-height: 0; }
.view { flex: 1; display: flex; align-items: flex-start; overflow: hidden; background: #404040; }
.panel { width: 597px; height: 1047px; margin: -49px 0 0 4px; box-sizing: border-box; border: 1px solid #fff; border-radius: 4px; flex: none; display: flex; flex-direction: column; }
.layer { height: 948px; padding: 31px 30px 0; border-bottom: 1px solid #fff; flex: none; }
h3, h4, h5 { margin: 0; font-weight: 400; }
h4 { font-size: 24px; line-height: 28.800px; color: #9b9b9b; margin: 27px 0 7px; }
h5 { font-size: 20px; line-height: 24px; margin-bottom: 8px; }
.control { height: 38px; box-sizing: border-box; border: 1px solid #ced4da; border-radius: 4px; background: #fff; color: #495057; padding: 6px 12px; }
.name { margin-top: -1px; }
.name + h4 { margin-top: 26px; }
.group { margin-bottom: 16px; }
.group label { display: flex; align-items: center; height: 24px; }
.group label.off span { color: #6c757d; }
.radio { width: 12px; height: 12px; box-sizing: border-box; border-radius: 50%; background: linear-gradient(#ececec, #d6d6d6); margin-right: 8px; }
.radio.on { background: #5c5c5c; border: 3.500px solid #e0e0e0; }
.off .radio { opacity: .5; }
sup { font-size: 12px; font-weight: 700; line-height: 12px; color: #daa520; margin-left: 4px; margin-top: -7px; vertical-align: baseline; }
.select { height: 40px; box-sizing: border-box; display: flex; align-items: center; border: 2px solid #c8ccd0; border-radius: 4px; background: #fff; color: #333; margin-bottom: 16px; padding: 0 11px 0 10px; }
.chip { background: #e6e6e6; border-radius: 2px; height: 26px; font-size: 13.600px; line-height: 25px; padding: 0 7px 0 6px; color: #333; display: flex; align-items: center; gap: 11px; }
.value { line-height: 22px; }
.clear { margin-left: auto; margin-right: 12px; }
.value + .bar { margin-left: auto; }
.bar { width: 1px; height: 20px; background: #ccc; margin-right: 11px; }
.slider { display: flex; align-items: center; height: 22px; margin-top: 16px; }
.track { height: 4px; width: 259px; background: #e5e0da; }
.rest { width: auto; flex: 1; }
.thumb { width: 11px; height: 21px; box-sizing: border-box; border: 1px solid #8f8880; background: linear-gradient(#f7f5f3, #e5e0da); display: flex; flex-direction: column; justify-content: center; align-items: center; gap: 2px; }
.thumb b { width: 5px; height: 1px; background: #8a8a8a; }
.buttons { display: flex; margin-top: 44px; }
button { font: inherit; color: #fff; border: 0; border-radius: 4px; height: 38px; padding: 0 13px; white-space: nowrap; }
.red { background: #dc3545; }
.teal { background: #17a2b8; }
.green { background: #28a745; }
.next { flex: 1; display: flex; justify-content: space-between; padding: 12px 30px 0; background: #3e3e3e; border-radius: 0 0 3px 3px; }
.next h3 { font-size: 28px; line-height: 34px; }
.swatch { width: 50px; height: 20px; background: #00f; }
.map { margin-left: 19px; width: 1270px; height: 868px; flex: none; position: relative; box-shadow: 0 5px 5px 5px #fff; }
.tiles { display: block; }
.land { fill: #f2efe9; }
.isle { stroke: #f2efe9; stroke-width: 1.500; }
.water { fill: #aad3df; stroke: #aad3df; stroke-width: 1.500; }
.river { fill: none; stroke: #cbdfe0; stroke-width: 2.500; }
.border { fill: none; stroke: #bfa0bd; stroke-width: 2.800; stroke-linejoin: round; }
.place { font: 10px "Noto Sans", "DejaVu Sans", "Noto Sans CJK SC", sans-serif; text-anchor: middle; fill: #654073; stroke: rgba(255, 255, 255, .65); stroke-width: 2px; paint-order: stroke; stroke-linejoin: round; }
.sea { font-style: italic; fill: #4d80b3; }
.credit { position: absolute; right: 0; bottom: 0; height: 16px; box-sizing: border-box; padding: 0 5px; background: rgba(255, 255, 255, .7); color: #333; font-size: 11px; line-height: 16px; white-space: nowrap; }
.credit a { color: #0078a8; }
.scroll { width: 15px; flex: none; background: #f1f1f1; display: flex; flex-direction: column; }
.grip { margin: 170px 2px 0; flex: 1; background: #c1c1c1; width: 11px; }
</style>
